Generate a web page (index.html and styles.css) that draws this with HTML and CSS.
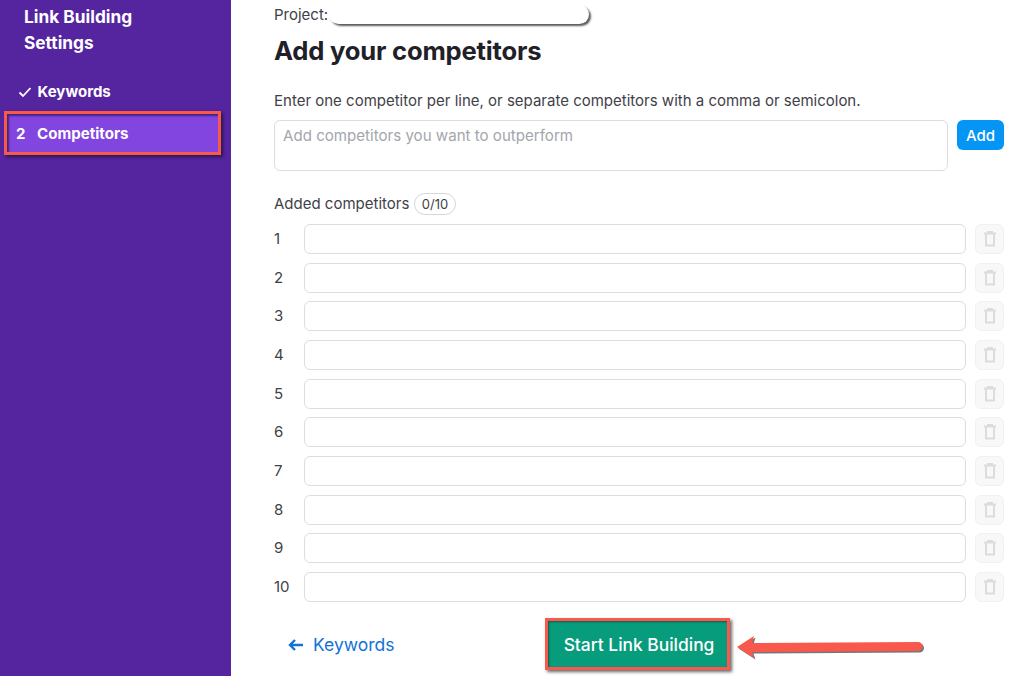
FILE: index.html
```html
<!DOCTYPE html>
<html lang="en">
<head>
<meta charset="utf-8">
<title>Link Building Settings</title>
<link rel="stylesheet" href="styles.css">
</head>
<body>
<div class="app">
  <aside class="sidebar">
    <h2 class="side-title">Link Building<br>Settings</h2>
    <nav class="steps">
      <div class="step">
        <svg class="check" viewBox="0 0 14 12" width="14" height="12"><path d="M1.5 6.5 L5 10 L12.5 2" fill="none" stroke="#fff" stroke-width="1.8"/></svg>
        <span>Keywords</span>
      </div>
      <div class="step active"><span class="num">2</span><span>Competitors</span></div>
    </nav>
  </aside>
  <main class="main">
    <div class="project">Project:<span class="pill"></span></div>
    <h1 class="title">Add your competitors</h1>
    <p class="hint">Enter one competitor per line, or separate competitors with a comma or semicolon.</p>
    <div class="add-row">
      <div class="textarea">Add competitors you want to outperform</div>
      <button class="add-btn">Add</button>
    </div>
    <div class="added">Added competitors <span class="count">0/10</span></div>
    <div class="rows">
      <div class="row"><span class="idx">1</span><div class="field"></div><div class="trash"><svg viewBox="0 0 14 16" width="14" height="16"><path d="M1 2.5H13M3 2.5V14.5H11V2.5M5 2.5V1H9V2.5" fill="none" stroke="#dcdcdf" stroke-width="2"/></svg></div></div>
      <div class="row"><span class="idx">2</span><div class="field"></div><div class="trash"><svg viewBox="0 0 14 16" width="14" height="16"><path d="M1 2.5H13M3 2.5V14.5H11V2.5M5 2.5V1H9V2.5" fill="none" stroke="#dcdcdf" stroke-width="2"/></svg></div></div>
      <div class="row"><span class="idx">3</span><div class="field"></div><div class="trash"><svg viewBox="0 0 14 16" width="14" height="16"><path d="M1 2.5H13M3 2.5V14.5H11V2.5M5 2.5V1H9V2.5" fill="none" stroke="#dcdcdf" stroke-width="2"/></svg></div></div>
      <div class="row"><span class="idx">4</span><div class="field"></div><div class="trash"><svg viewBox="0 0 14 16" width="14" height="16"><path d="M1 2.5H13M3 2.5V14.5H11V2.5M5 2.5V1H9V2.5" fill="none" stroke="#dcdcdf" stroke-width="2"/></svg></div></div>
      <div class="row"><span class="idx">5</span><div class="field"></div><div class="trash"><svg viewBox="0 0 14 16" width="14" height="16"><path d="M1 2.5H13M3 2.5V14.5H11V2.5M5 2.5V1H9V2.5" fill="none" stroke="#dcdcdf" stroke-width="2"/></svg></div></div>
      <div class="row"><span class="idx">6</span><div class="field"></div><div class="trash"><svg viewBox="0 0 14 16" width="14" height="16"><path d="M1 2.5H13M3 2.5V14.5H11V2.5M5 2.5V1H9V2.5" fill="none" stroke="#dcdcdf" stroke-width="2"/></svg></div></div>
      <div class="row"><span class="idx">7</span><div class="field"></div><div class="trash"><svg viewBox="0 0 14 16" width="14" height="16"><path d="M1 2.5H13M3 2.5V14.5H11V2.5M5 2.5V1H9V2.5" fill="none" stroke="#dcdcdf" stroke-width="2"/></svg></div></div>
      <div class="row"><span class="idx">8</span><div class="field"></div><div class="trash"><svg viewBox="0 0 14 16" width="14" height="16"><path d="M1 2.5H13M3 2.5V14.5H11V2.5M5 2.5V1H9V2.5" fill="none" stroke="#dcdcdf" stroke-width="2"/></svg></div></div>
      <div class="row"><span class="idx">9</span><div class="field"></div><div class="trash"><svg viewBox="0 0 14 16" width="14" height="16"><path d="M1 2.5H13M3 2.5V14.5H11V2.5M5 2.5V1H9V2.5" fill="none" stroke="#dcdcdf" stroke-width="2"/></svg></div></div>
      <div class="row"><span class="idx">10</span><div class="field"></div><div class="trash"><svg viewBox="0 0 14 16" width="14" height="16"><path d="M1 2.5H13M3 2.5V14.5H11V2.5M5 2.5V1H9V2.5" fill="none" stroke="#dcdcdf" stroke-width="2"/></svg></div></div>
    </div>
    <div class="footer">
      <a class="back">
        <svg viewBox="0 0 16 12" width="16" height="12"><path d="M15 6H2M7 1 L2 6 L7 11" fill="none" stroke="#1272d6" stroke-width="2.4"/></svg>
        Keywords
      </a>
      <button class="start">Start Link Building</button>
      <svg class="arrow" viewBox="0 0 190 30" width="190" height="30"><path d="M2 14 L19 3 L17 10 L183 9 A4 4 0 0 1 183 18 L17 19 L19 25 Z" fill="#4a4a4a" opacity=".75" transform="translate(1.5 1.5)"/><path d="M2 14 L19 3 L17 10 L183 9 A4 4 0 0 1 183 18 L17 19 L19 25 Z" fill="#f9594c"/></svg>
    </div>
  </main>
</div>
</body>
</html>
```
FILE: styles.css
```css
* { box-sizing: border-box; }
html, body { margin: 0; height: 100%; }
body { font-family: Inter, "Liberation Sans", sans-serif; color: #3f4148; background: #fff; overflow: hidden; }
.app { display: flex; height: 676px; }
.sidebar { width: 231px; flex: none; background: #55249f; color: #fff; padding-top: 4px; }
.side-title { margin: 0; padding-left: 24px; font-size: 17.3px; font-weight: 700; line-height: 26px; }
.steps { margin-top: 19px; padding-left: 6px; display: flex; flex-direction: column; }
.step { display: flex; align-items: center; height: 33px; font-size: 15px; font-weight: 700; }
.check { margin-left: 12px; margin-right: 5.5px; }
.step.active { position: relative; width: 217px; height: 44px; margin-top: 3px; margin-left: -2px; font-size: 15.1px; background: #8245e0; border: 3px solid #f9594c; box-shadow: 2px 2px 3px rgba(30,20,60,.8), inset 2px 2px 2px rgba(40,20,80,.7); }
.num { width: 30px; padding-left: 9px; font-size: 15px; flex: none; }
.main { flex: 1; padding: 5px 20px 0 43px; min-width: 0; }
.project { display: flex; align-items: center; height: 18px; font-size: 15px; }
.pill { width: 260px; height: 19px; margin-left: 1px; background: #fff; border-radius: 10px; box-shadow: 2px 2px 2px rgba(50,50,50,.8); }
.title { margin: 10px 0 0; font-size: 25.6px; line-height: 36px; font-weight: 700; color: #1f2028; font-family: Inter, sans-serif; letter-spacing: -.2px; }
.hint { margin: 23px 0 0; font-size: 15px; line-height: 18px; }
.add-row { display: flex; justify-content: space-between; align-items: flex-start; margin-top: 10px; }
.textarea { width: 674px; height: 51px; padding: 6px 8px; border: 1px solid #dcdde1; border-radius: 6px; font-size: 15.1px; line-height: 18px; color: #a4a6ad; }
.add-btn { width: 47px; height: 30px; border: 0; border-radius: 6px; background: #0495f5; color: #fff; font: 500 15px Inter, sans-serif; padding: 0; }
.added { display: flex; align-items: center; gap: 5px; margin-top: 22px; font-size: 15px; height: 22px; line-height: 20px; }
.count { display: inline-block; height: 22px; padding: 0 6.5px; border: 1px solid #d6d7db; border-radius: 11px; font-size: 13px; line-height: 20px; }
.rows { display: flex; flex-direction: column; gap: 8.67px; margin-top: 9px; }
.row { display: flex; align-items: center; height: 30px; }
.idx { width: 30px; font-size: 15px; margin-top: -1px; }
.field { width: 662px; height: 30px; border: 1px solid #dcdde1; border-radius: 6px; }
.trash { width: 29px; height: 30px; margin-left: 9px; background: #f8f8f9; border: 1px solid #f1f1f3; border-radius: 6px; display: flex; align-items: center; justify-content: center; }
.footer { position: relative; display: flex; align-items: center; margin-top: 14px; height: 58px; }
.back { display: flex; align-items: center; gap: 9px; margin-left: 14px; font-size: 17.5px; color: #1272d6; }
.start { position: absolute; left: 271px; top: 2px; width: 185px; height: 52px; border: 3px solid #f9594c; background: #069c7c; color: #fff; font: 500 17.4px Inter, sans-serif; padding: 2px 0 0 3px; box-shadow: 2px 2px 3px rgba(40,40,40,.7), inset 1px 1px 2px rgba(40,40,40,.6); }
.arrow { position: absolute; left: 461px; top: 17px; }
```
